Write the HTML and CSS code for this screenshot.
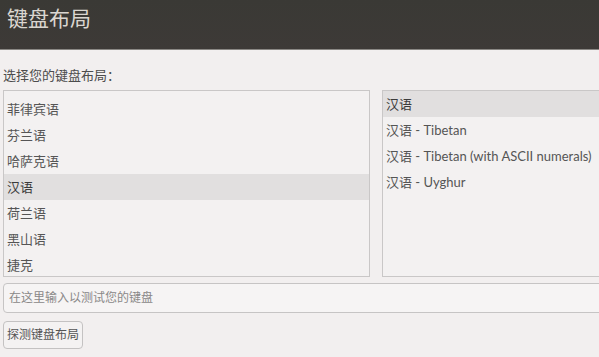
FILE: index.html
```html
<!DOCTYPE html>
<html lang="zh-CN">
<head>
    <meta charset="UTF-8">
    <title>键盘布局</title>
    <link rel="stylesheet" href="styles.css">
</head>
<body>
    <div class="header">键盘布局</div>
    <div class="main">
        <div class="label">选择您的键盘布局：</div>
        <div class="lists">
            <ul class="list list-left">
                <li>菲律宾语</li>
                <li>芬兰语</li>
                <li>哈萨克语</li>
                <li class="on">汉语</li>
                <li>荷兰语</li>
                <li>黑山语</li>
                <li>捷克</li>
            </ul>
            <ul class="list list-right">
                <li class="on">汉语</li>
                <li>汉语 - Tibetan</li>
                <li>汉语 - Tibetan (with ASCII numerals)</li>
                <li>汉语 - Uyghur</li>
            </ul>
        </div>
        <div class="test">在这里输入以测试您的键盘</div>
        <div class="btn">探测键盘布局</div>
    </div>
</body>
</html>
```

FILE: styles.css
```css
html,body{margin:0;padding:0;}
body{width:599px;height:357px;overflow:hidden;background:#f2efef;font-family:Lato,"Noto Sans CJK SC",sans-serif;color:#4a4a4a;font-size:13px;}
ul{list-style:none;padding:0;margin:0;}
.header{height:50px;box-sizing:border-box;padding:3px 0 0 7px;background:linear-gradient(#3a3935,#3d3a37);border-bottom:1px solid #8a8884;color:#dad6d0;font-size:21px;line-height:30px;}
.main{width:640px;padding:16px 0 0 3px;}
.label{height:24px;line-height:18px;color:#4c4c4c;}
.lists{display:flex;gap:12px;}
.list{height:187px;box-sizing:border-box;overflow:hidden;border:1px solid #c9c7c7;background:#f3f1f1;}
.list li{height:26px;line-height:26px;padding-left:3px;white-space:nowrap;color:#555;}
.list li.on{background:#e1dfdf;color:#3c3c3c;}
.list-left{width:367px;padding-top:5px;}
.list-right{width:260px;}
.test{margin-top:6px;height:30px;box-sizing:border-box;border:1px solid #c6c4c4;border-radius:4px;background:#f6f4f4;color:#8a8888;font-size:12px;line-height:28px;padding-left:5px;}
.btn{display:inline-block;margin-top:8px;height:28px;box-sizing:border-box;border:1px solid #c4c2c2;border-radius:4px;background:#f4f2f2;color:#555;font-size:12px;line-height:26px;padding:0 3px;}
```
